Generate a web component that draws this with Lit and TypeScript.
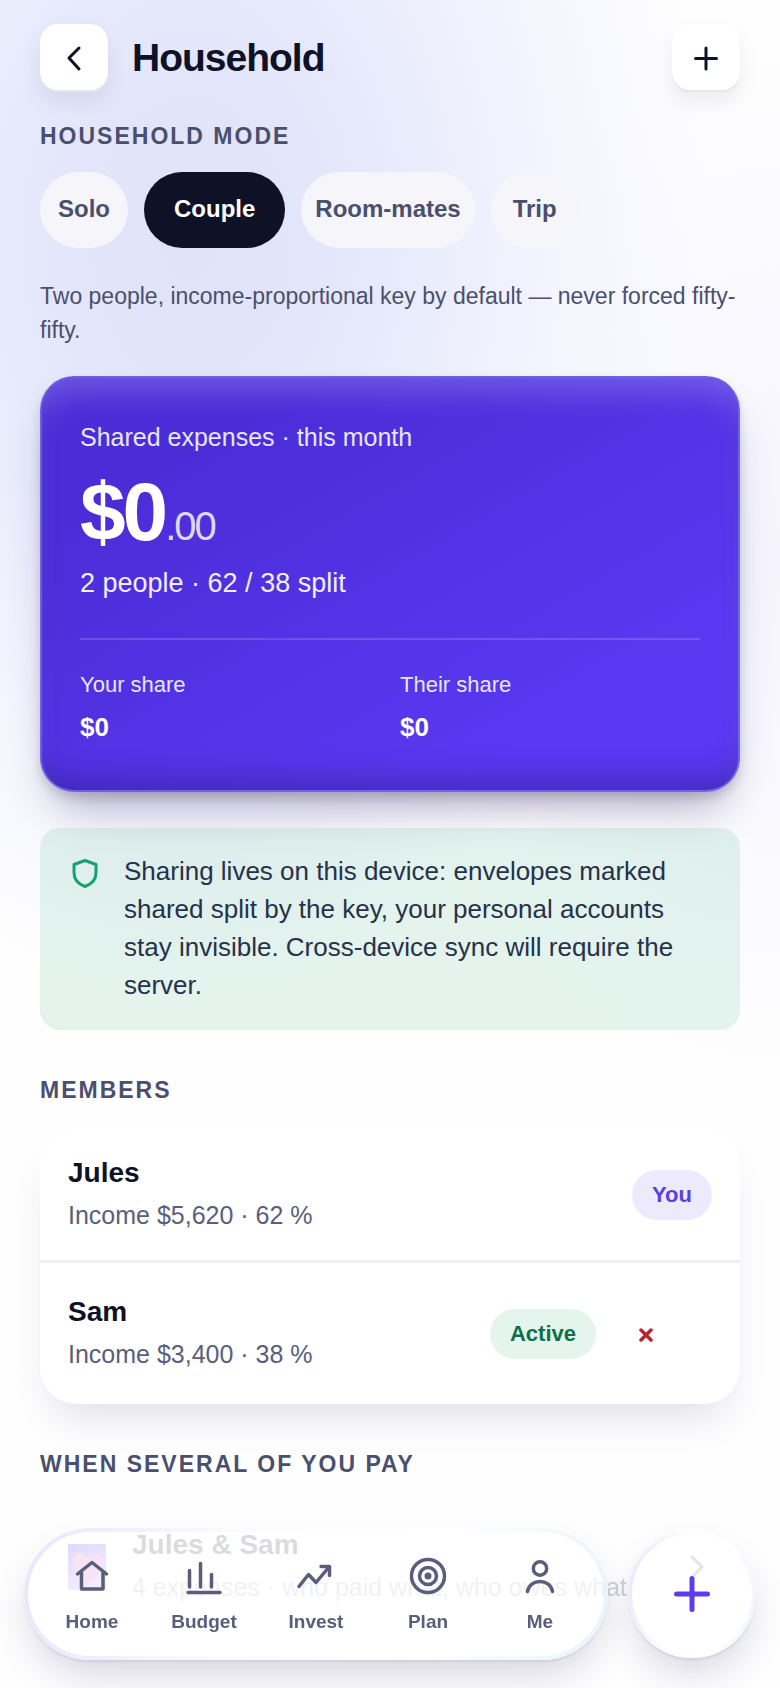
import { LitElement, html, css, svg } from "lit";
import { customElement, state } from "lit/decorators.js";
import { classMap } from "lit/directives/class-map.js";

const icons = {
  home: svg`<path d="M5.500 18 20 6.500 34.500 18"/><path d="M9.500 16.500V33H31V16.500"/>`,
  budget: svg`<path d="M5.500 14.500V31M16.500 7.500V31M27.500 18.500V31M4 36.500h32"/>`,
  invest: svg`<path d="M3 30.500l9.500-12 7.500 8L33 11"/><path d="M25 10.500h8.500v9"/>`,
  plan: svg`<circle cx="20" cy="20" r="16.500"/><circle cx="20" cy="20" r="8.500"/><circle class="dot" cx="20" cy="20" r="3.500"/>`,
  me: svg`<circle cx="20" cy="12.500" r="6.700"/><path d="M7.500 35.500C10 22 30 22 32.500 35.500"/>`,
};

@customElement("app-root")
export class AppRoot extends LitElement {
  @state() private mode = "Couple";

  private modes = ["Solo", "Couple", "Room-mates", "Trip"];
  private tabs = [
    { label: "Home", icon: icons.home },
    { label: "Budget", icon: icons.budget },
    { label: "Invest", icon: icons.invest },
    { label: "Plan", icon: icons.plan },
    { label: "Me", icon: icons.me },
  ];

  static styles = css`
    :host {
      display: block;
      box-sizing: border-box;
      min-height: 100vh;
      padding: 24px 40px 0;
      font-family: "Liberation Sans", Arial, sans-serif;
      color: #0f1226;
      background:
        radial-gradient(520px 760px at 190px 240px, #dfe2f9 0%, #e6e9fb 35%, #f3f4fe 68%, rgba(254, 254, 254, 0) 100%),
        radial-gradient(400px 520px at 100% 560px, #f5f4fe 0%, rgba(254, 254, 254, 0) 100%),
        #fefefe;
    }
    *, *::before { box-sizing: border-box; }
    h1, h2, p { margin: 0; }
    button { font: inherit; color: inherit; border: 0; padding: 0; cursor: pointer; }
    svg { display: block; fill: none; stroke: currentColor; stroke-linecap: round; stroke-linejoin: round; }

    .header { display: flex; align-items: center; gap: 24px; }
    .square {
      display: grid;
      place-items: center;
      width: 68px;
      height: 68px;
      border-radius: 18px;
      background: #fff;
      box-shadow: inset 0 -2px 0 rgba(15, 18, 38, 0.1), 0 10px 20px rgba(15, 18, 38, 0.07);
    }
    .square svg { width: 36px; height: 36px; stroke-width: 3; }
    h1 { flex: 1; font-size: 39px; line-height: 48px; font-weight: 700; letter-spacing: -1px; }
    h2 { font-size: 23px; line-height: 32px; font-weight: 700; letter-spacing: 2px; text-transform: uppercase; color: #4b4f6e; }

    .mode { margin-top: 28px; }
    .chips { display: flex; gap: 16px; margin-top: 20px; }
    .chip {
      min-width: 88px;
      height: 76px;
      padding: 0 14px 2px;
      border-radius: 38px;
      font-size: 24px;
      font-weight: 700;
      color: #4b4f6e;
      background: #f5f5fa;
    }
    .chip.on { padding: 0 30px 2px; color: #fff; background: #0f1226; }
    .hint { margin-top: 31px; font-size: 23px; line-height: 34px; color: #4b4f6e; }

    .total {
      margin-top: 29px;
      padding: 41px 38px 46px;
      border: 2px solid rgba(125, 130, 235, 0.6);
      border-radius: 34px;
      color: #fff;
      background: linear-gradient(150deg, #4b2dd8 20%, #5939f2 80%) border-box;
      box-shadow:
        inset 0 26px 30px -12px rgba(255, 255, 255, 0.2),
        inset 0 -24px 28px -12px rgba(30, 20, 90, 0.32),
        0 6px 10px rgba(15, 18, 38, 0.14),
        0 28px 44px -16px rgba(35, 20, 90, 0.36);
    }
    .total .name { font-size: 25px; line-height: 36px; color: #e9e5fc; }
    .amount { font-size: 82px; line-height: 76px; margin-top: 19px; font-weight: 700; letter-spacing: -3px; }
    .amount small { font-size: 40px; line-height: 40px; font-weight: 400; letter-spacing: -2px; color: #ded8fb; }
    .split { margin-top: 14px; font-size: 27px; line-height: 38px; color: #f1eefd; }
    .shares { display: grid; grid-template-columns: 1fr 1fr; gap: 20px; margin: 36px 0 0; padding-top: 28px; border-top: 2px solid rgba(255, 255, 255, 0.16); }
    .shares dt { font-size: 22px; line-height: 34px; color: #e9e5fc; }
    .shares dd { margin: 8px 0 0; font-size: 26px; line-height: 34px; font-weight: 700; }

    .note {
      display: flex;
      gap: 22px;
      margin-top: 36px;
      padding: 24px 40px 26px 30px;
      border-radius: 20px;
      background: rgba(14, 164, 104, 0.11);
      color: #26314a;
      font-size: 26px;
      line-height: 38px;
    }
    .note svg { flex: none; width: 32px; height: 40px; stroke: #16a26c; stroke-width: 3; }

    .members { margin-top: 44px; }
    .card {
      margin: 23px 0 0;
      padding: 0;
      list-style: none;
      border-radius: 36px;
      background: #fff;
      box-shadow: 0 24px 40px -14px rgba(40, 30, 110, 0.15);
    }
    .row { display: flex; align-items: center; min-height: 131px; padding: 0 28px; }
    .row + .row { min-height: 144px; border-top: 3px solid #f0f0f2; }
    .who { flex: 1; }
    .who strong { display: block; font-size: 28px; line-height: 40px; }
    .who span { display: block; font-size: 25px; line-height: 44px; color: #5a5e7b; }
    .badge { padding: 0 20px; border-radius: 26px; font-size: 22px; line-height: 50px; font-weight: 700; color: #5a3fe0; background: #edeafe; }
    .badge.active { color: #0d7048; background: #e4f5ed; }
    .remove { display: grid; place-items: center; width: 88px; height: 88px; margin: 0 22px 0 6px; color: #b3262d; background: none; }
    .remove svg { width: 16px; height: 16px; stroke-width: 3.500; }

    .pay { margin-top: 44px; }
    .link { display: flex; align-items: center; gap: 26px; padding: 22px 28px; color: inherit; text-decoration: none; box-shadow: none; background: none; }
    .link strong { opacity: 0.5; }
    .link .who span { white-space: nowrap; opacity: 0.28; }
    .link > svg { flex: none; width: 38px; height: 46px; stroke: none; }
    .link > svg.arrow { width: 24px; stroke: currentColor; stroke-width: 3; opacity: 0.35; }

    .dock { position: fixed; left: 24px; right: 24px; bottom: 28px; display: flex; align-items: center; gap: 20px; }
    .tabs, .add {
      position: relative;
      background: rgba(255, 255, 255, 0.7);
      box-shadow: 0 20px 40px -8px rgba(40, 30, 110, 0.2), 0 2px 3px rgba(15, 18, 38, 0.08);
    }
    .tabs { flex: 1; display: flex; height: 132px; padding: 0 12px; border-radius: 66px; }
    .tabs::before, .add::before {
      content: "";
      position: absolute;
      inset: 0;
      padding: 4px;
      border-radius: inherit;
      background: linear-gradient(100deg, #e9e5fd, #fcfbff 35%, #fff 70%, #e8f4fb);
      mask: linear-gradient(#000 0 0) content-box exclude, linear-gradient(#000 0 0);
      pointer-events: none;
    }
    .tab { flex: 1; display: flex; flex-direction: column; align-items: center; gap: 12px; padding-top: 28px; font-size: 19px; line-height: 28px; font-weight: 700; color: #5a5e7b; text-decoration: none; }
    .tab svg { width: 40px; height: 40px; stroke-width: 3.500; }
    .dot { fill: currentColor; stroke: none; }
    .add { display: grid; place-items: center; width: 128px; height: 128px; border-radius: 50%; color: #5a3df0; }
    .add svg { width: 40px; height: 40px; stroke-width: 5; }
  `;

  render() {
    return html`
      <header class="header">
        <button class="square" aria-label="Back"><svg viewBox="0 0 36 36"><path d="M23 8 13 18l10 11"/></svg></button>
        <h1>Household</h1>
        <button class="square" aria-label="Add member"><svg viewBox="0 0 36 36"><path d="M18 8v21M7.500 18.500h21"/></svg></button>
      </header>
      <main>
        <h2 class="mode">Household mode</h2>
        <div class="chips">
          ${this.modes.map(
            (m) => html`<button
              class=${classMap({ chip: true, on: m === this.mode })}
              aria-pressed=${m === this.mode}
              @click=${() => (this.mode = m)}
            >${m}</button>`
          )}
        </div>
        <p class="hint">Two people, income-proportional key by default — never forced fifty-fifty.</p>

        <section class="total">
          <p class="name">Shared expenses · this month</p>
          <p class="amount">$0<small>.00</small></p>
          <p class="split">2 people · 62 / 38 split</p>
          <dl class="shares">
            <div><dt>Your share</dt><dd>$0</dd></div>
            <div><dt>Their share</dt><dd>$0</dd></div>
          </dl>
        </section>

        <section class="note">
          <svg viewBox="0 0 32 40"><path d="M15 8.500 26 12.500v8c0 7-4 11.500-11 14-7-2.500-11-7-11-14v-8z"/></svg>
          <p>Sharing lives on this device: envelopes marked shared split by the key, your personal accounts stay invisible. Cross-device sync will require the server.</p>
        </section>

        <h2 class="members">Members</h2>
        <ul class="card">
          <li class="row">
            <div class="who"><strong>Jules</strong><span>Income $5,620 · 62 %</span></div>
            <span class="badge">You</span>
          </li>
          <li class="row">
            <div class="who"><strong>Sam</strong><span>Income $3,400 · 38 %</span></div>
            <span class="badge active">Active</span>
            <button class="remove" aria-label="Remove Sam"><svg viewBox="0 0 16 16"><path d="M3 4l10 10M13 4 3 14"/></svg></button>
          </li>
        </ul>

        <h2 class="pay">When several of you pay</h2>
        <a class="card link" href="#shared">
          <svg viewBox="0 0 38 46">
            <defs><linearGradient id="tile" x2="0.4" y2="1"><stop stop-color="#8f7bf5"/><stop offset="1" stop-color="#d3c8ff"/></linearGradient></defs>
            <path fill="url(#tile)" d="M0 0h38v46H0z"/>
            <path fill="#e6a0dc" d="M19 40C8 32 4 25 4 17c0-9 12-12 15-2 3-10 15-7 15 2 0 8-4 15-15 23z"/>
          </svg>
          <div class="who"><strong>Jules &amp; Sam</strong><span>4 expenses · who paid what, who owes what</span></div>
          <svg class="arrow" viewBox="0 0 24 46"><path d="M4 13l10 10L4 33"/></svg>
        </a>
      </main>

      <div class="dock">
        <nav class="tabs">
          ${this.tabs.map(
            (t) => html`<a class="tab" href="#${t.label.toLowerCase()}"><svg viewBox="0 0 40 40">${t.icon}</svg>${t.label}</a>`
          )}
        </nav>
        <button class="add" aria-label="Add"><svg viewBox="0 0 40 40"><path d="M20 4.500v31M4.500 20h31"/></svg></button>
      </div>
    `;
  }
}
